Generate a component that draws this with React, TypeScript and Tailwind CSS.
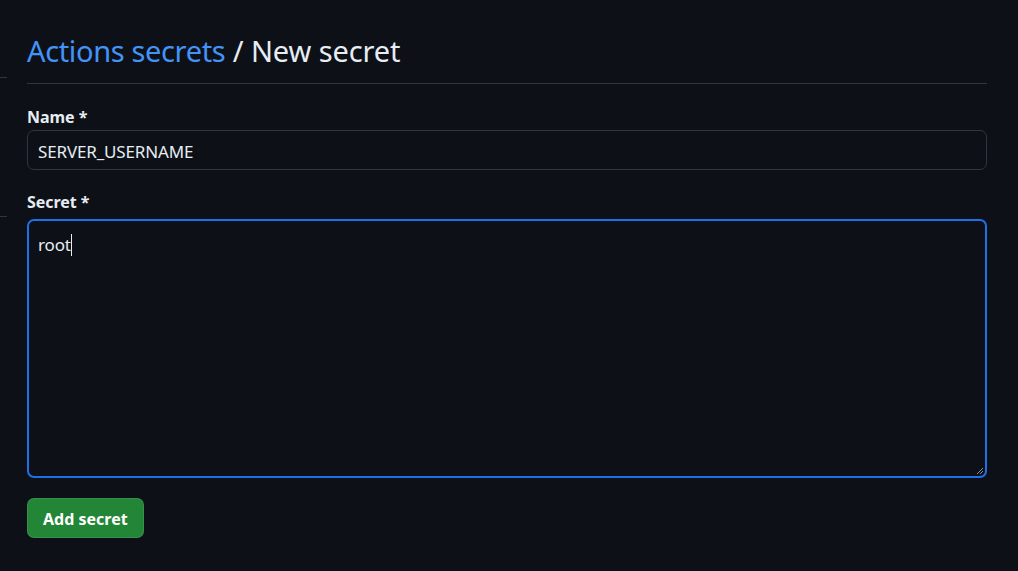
import React from 'react';

// Formulario para crear un nuevo secreto de Actions (tema oscuro)
export default function App() {
  return (
    <div
      className="relative min-h-[571px] w-full bg-[#0d1117] text-[#e6edf3]"
      style={{ fontFamily: '"Noto Sans", "Open Sans", sans-serif' }}
    >
      {/* Restos del menú lateral */}
      <div className="absolute left-0 top-[77px] h-px w-[7px] bg-[#30363d]" />
      <div className="absolute left-0 top-[216px] h-px w-[7px] bg-[#30363d]" />

      <div className="w-[960px] ml-[27px] pt-[30px]">
        {/* Encabezado */}
        <div className="border-b border-[#30363d] pb-[11px]">
          <h1 className="text-[29px] leading-[42px] font-normal tracking-[-0.35px]">
            <a className="text-[#4493f8]">Actions secrets</a>
            <span className="text-[#e6edf3] tracking-[-0.1px]"> / New secret</span>
          </h1>
        </div>

        {/* Nombre */}
        <div className="mt-[22px]">
          <label className="block text-[16px] leading-[22px] font-bold tracking-[-0.05px]">
            Name *
          </label>
          <div className="mt-[2px] h-[40px] rounded-[7px] border border-[#30363d] bg-[#0d1117] px-[10px] pt-[3px] flex items-center">
            <span className="text-[17px] tracking-[-0.15px]">SERVER_USERNAME</span>
          </div>
        </div>

        {/* Secreto */}
        <div className="mt-[21px]">
          <label className="block text-[16px] leading-[22px] font-bold tracking-[-0.05px]">
            Secret *
          </label>
          <div className="relative mt-[6px] h-[259px] rounded-[7px] border-2 border-[#1f6feb] bg-[#0d1117] px-[9px] pt-[10px]">
            <span className="text-[17px] leading-[28px] tracking-[-0.15px]">root</span>
            <span className="inline-block align-middle w-px h-[22px] bg-[#e6edf3] -mt-[4px]" />
            {/* Asa de redimensión */}
            <svg
              className="absolute right-[1px] bottom-[1px]"
              width="8"
              height="8"
              viewBox="0 0 8 8"
            >
              <path d="M7 1 L1 7 M7 4 L4 7" stroke="#8b949e" strokeWidth="1" />
            </svg>
          </div>
        </div>

        {/* Botón */}
        <button className="mt-[20px] h-[40px] px-[15px] pt-[2px] rounded-[7px] bg-[#238636] border border-[rgba(240,246,252,0.1)] text-white text-[16px] font-bold">
          Add secret
        </button>
      </div>
    </div>
  );
}
